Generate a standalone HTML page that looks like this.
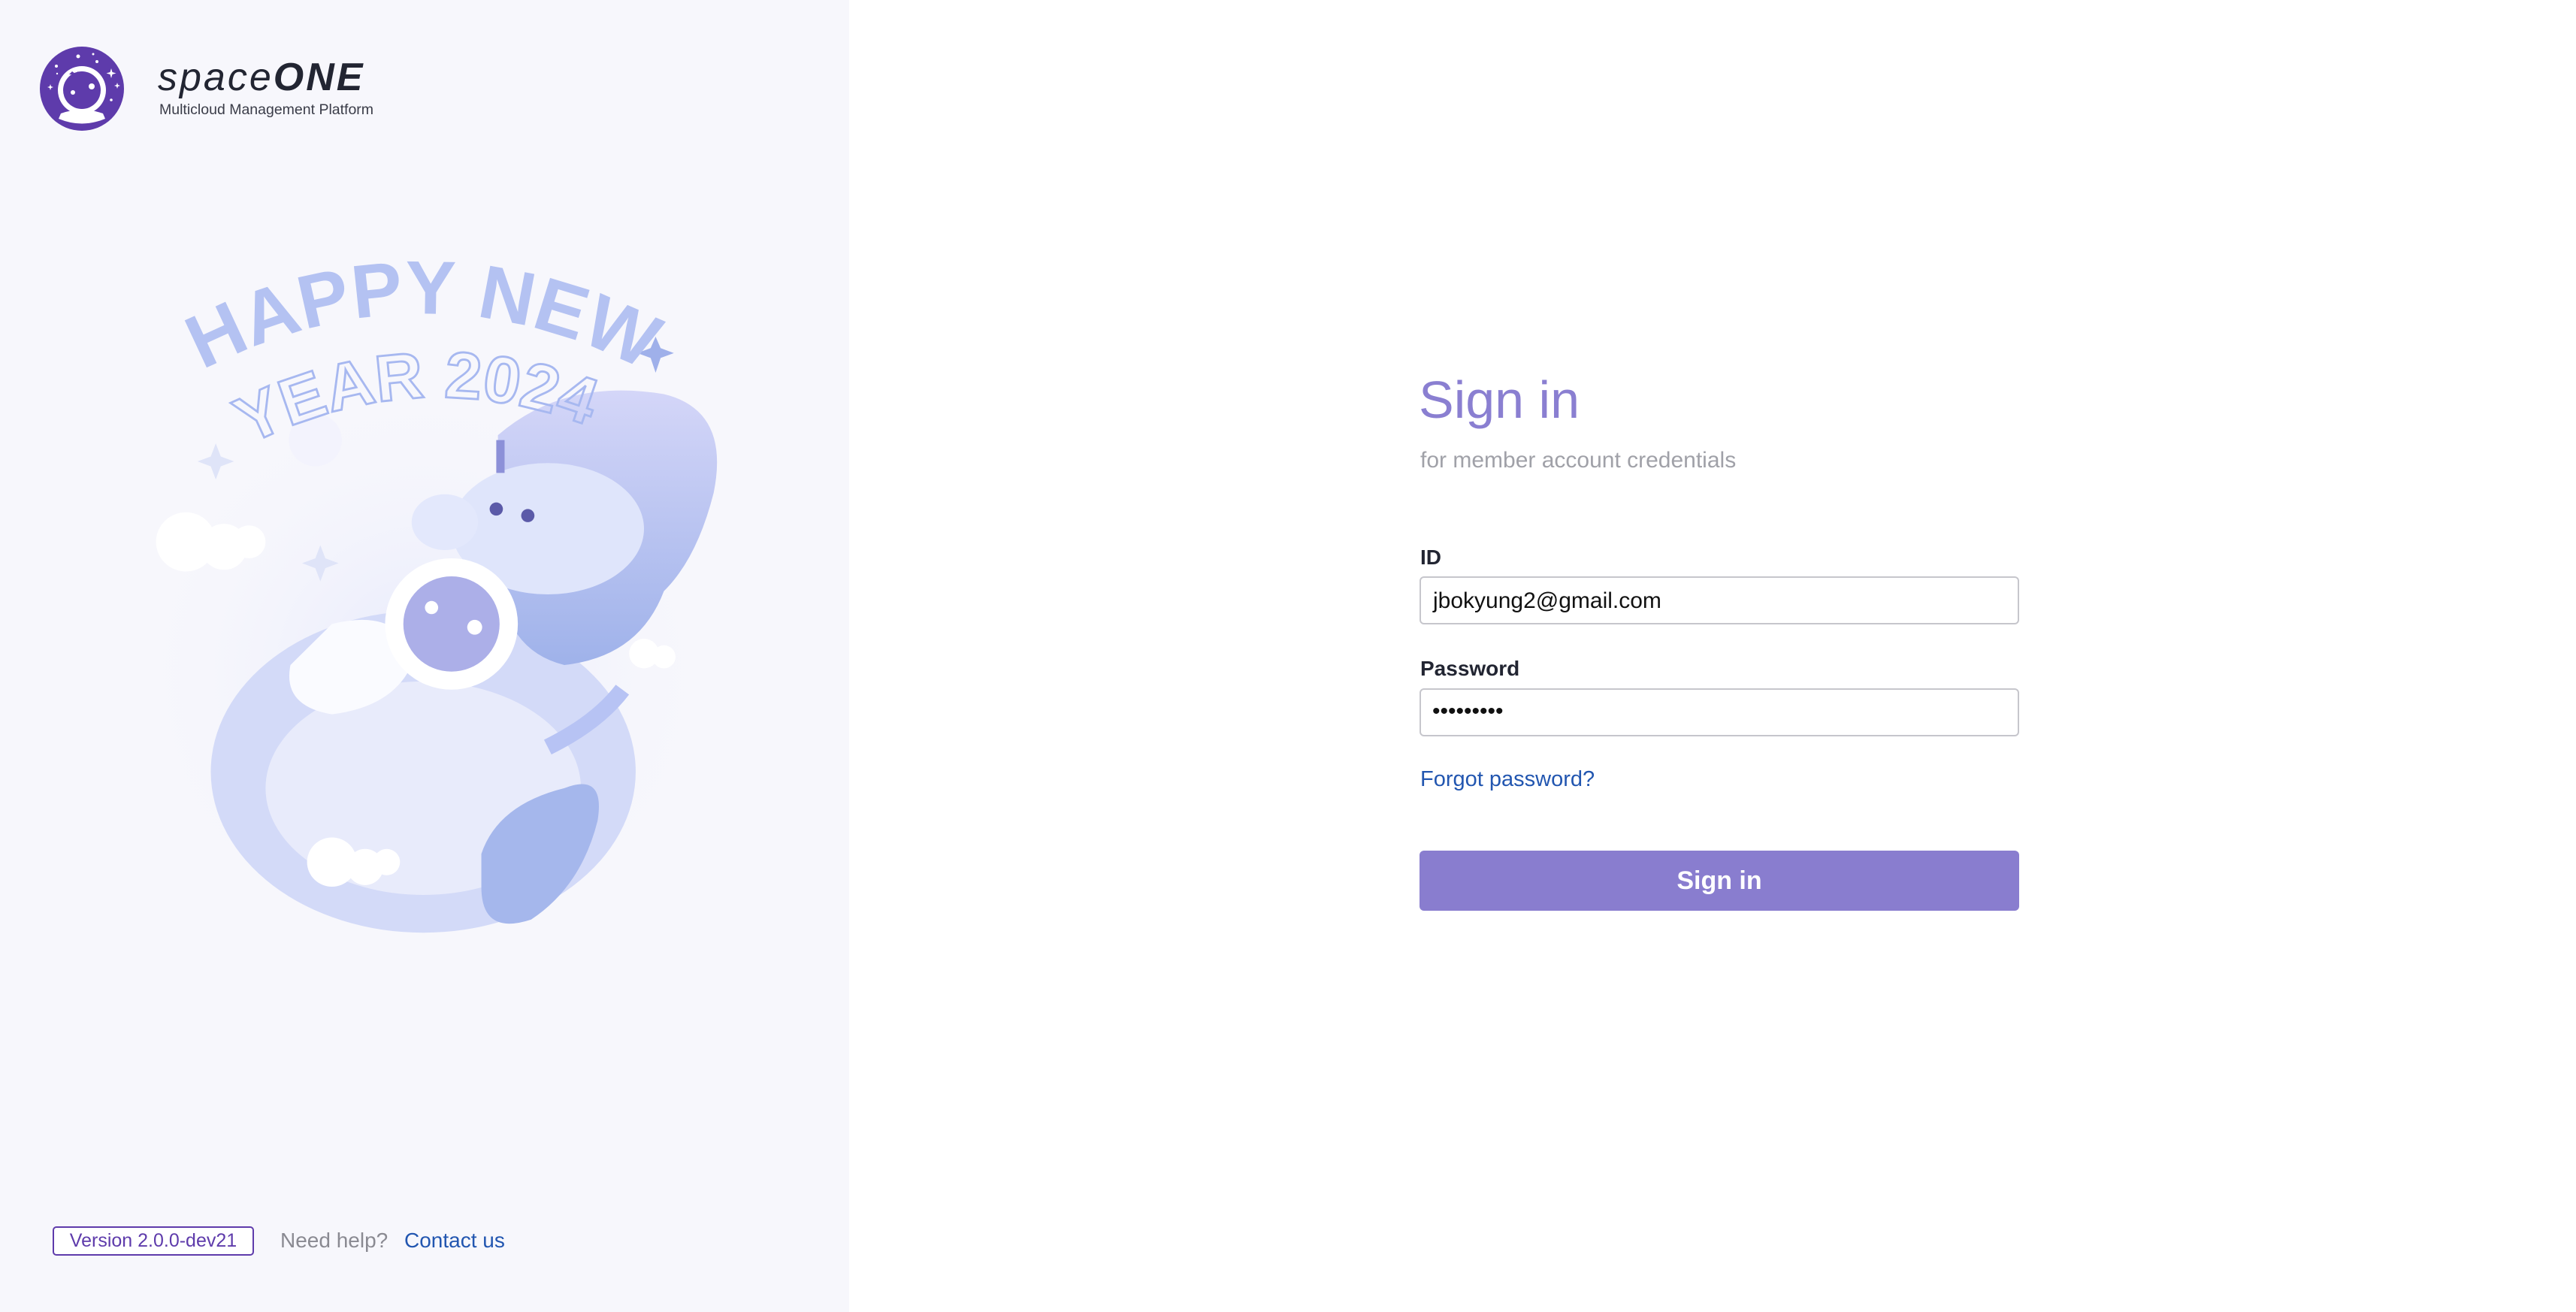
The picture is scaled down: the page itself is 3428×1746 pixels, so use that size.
<!DOCTYPE html>
<html><head><meta charset="utf-8">
<style>
*{margin:0;padding:0;box-sizing:border-box}
html,body{width:3428px;height:1746px;overflow:hidden;background:#fff;font-family:"Liberation Sans",sans-serif}
.left{position:absolute;left:0;top:0;width:1130px;height:1746px;background:#f7f7fc}
.abs{position:absolute;white-space:nowrap}
.inp{position:absolute;left:1889px;width:798px;height:64px;border:2px solid #c6c6cc;border-radius:6px;background:#fff}
</style></head><body>
<div class="left"></div>

<svg class="abs" style="left:50px;top:55px" width="130" height="130" viewBox="0 0 130 130">
<circle cx="59" cy="63" r="56" fill="#5e3bab"/>
<circle cx="59" cy="65" r="32" fill="#fff"/>
<circle cx="59" cy="65" r="25" fill="#5e3bab"/>
<path d="M42 44 L46 40 L50 43 L54 40 L56 45 Z" fill="#5e3bab"/>
<circle cx="72" cy="60" r="4" fill="#fff"/>
<circle cx="47" cy="68" r="3" fill="#fff"/>
<path d="M31 96 Q59 86 87 96 L90 103 Q59 116 28 103 Z" fill="#fff"/>
<circle cx="54" cy="20" r="2.5" fill="#fff"/><circle cx="79" cy="27" r="2" fill="#fff"/><circle cx="74" cy="17" r="1.5" fill="#fff"/>
<circle cx="25" cy="33" r="2" fill="#fff"/><circle cx="26" cy="43" r="1.2" fill="#fff"/><circle cx="98" cy="78" r="1.8" fill="#fff"/>
<path d="M98 36 l1.5 5 5 1.5 -5 1.5 -1.5 5 -1.5 -5 -5 -1.5 5 -1.5z" fill="#fff"/>
<path d="M106 55 l1 3 3 1 -3 1 -1 3 -1 -3 -3 -1 3 -1z" fill="#fff"/>
<path d="M17 57 l1 3 3 1 -3 1 -1 3 -1 -3 -3 -1 3 -1z" fill="#fff"/>
</svg>
<div class="abs" style="left:210px;top:76px;font-size:52px;font-style:italic;color:#222532;letter-spacing:3px;line-height:54px"><span style="font-weight:300">space</span><b>ONE</b></div>
<div class="abs" style="left:212px;top:135px;font-size:19.5px;color:#3a3c48">Multicloud Management Platform</div>

<svg class="abs" style="left:0;top:0" width="1130" height="1746" viewBox="0 0 511.6 799" preserveAspectRatio="none">
<defs>
<radialGradient id="gl" cx="0.5" cy="0.5" r="0.5"><stop offset="0" stop-color="#e6e9fb"/><stop offset="1" stop-color="#f7f7fc" stop-opacity="0"/></radialGradient>
<linearGradient id="mane" x1="0" y1="0" x2="0" y2="1"><stop offset="0" stop-color="#d4d6f8"/><stop offset="1" stop-color="#9fb2ea"/></linearGradient>
<path id="arc1" d="M110 232 Q255 150 400 232"/>
<path id="arc2" d="M130 282 Q250 210 375 268"/>
</defs>
<ellipse cx="255" cy="410" rx="180" ry="180" fill="url(#gl)"/>
<ellipse cx="255" cy="470" rx="128" ry="98" fill="#d3daf8"/>
<ellipse cx="255" cy="480" rx="95" ry="65" fill="#e8ebfb"/>
<path d="M300 265 Q340 230 400 240 Q440 250 430 300 Q420 340 400 360 Q385 400 340 405 Q300 395 300 340Z" fill="url(#mane)"/>
<path d="M290 520 Q300 490 340 480 Q365 470 360 500 Q350 540 320 560 Q290 570 290 540Z" fill="#a5b7ec"/>
<ellipse cx="330" cy="322" rx="58" ry="40" fill="#dfe5fb"/>
<ellipse cx="268" cy="318" rx="20" ry="17" fill="#e3e8fc"/>
<rect x="299" y="268" width="5" height="20" fill="#8c90d8"/>
<circle cx="299" cy="310" r="4" fill="#5b5aa8"/><circle cx="318" cy="314" r="4" fill="#5b5aa8"/>
<path d="M200 380 Q240 370 250 400 Q240 430 200 435 Q170 430 175 405Z" fill="#fafbff"/>
<circle cx="272" cy="380" r="40" fill="#fff"/>
<circle cx="272" cy="380" r="29" fill="#acafe8"/>
<circle cx="260" cy="370" r="4" fill="#fff"/><circle cx="286" cy="382" r="4.5" fill="#fff"/>
<path d="M330 455 Q360 440 375 420" stroke="#b7c3f4" stroke-width="10" fill="none"/>
<g fill="#fff"><circle cx="112" cy="330" r="18"/><circle cx="135" cy="333" r="14"/><circle cx="150" cy="330" r="10"/>
<circle cx="388" cy="398" r="9"/><circle cx="400" cy="400" r="7"/>
<circle cx="200" cy="525" r="15"/><circle cx="220" cy="528" r="11"/><circle cx="233" cy="525" r="8"/></g>
<circle cx="190" cy="268" r="16" fill="#f3f3fd"/>
<g fill="#dfe4f8"><path d="M130 270 l3 8 8 3 -8 3 -3 8 -3 -8 -8 -3 8 -3z"/><path d="M193 332 l3 8 8 3 -8 3 -3 8 -3 -8 -8 -3 8 -3z"/></g>
<path d="M395 205 l3 7 8 3 -8 3 -3 9 -3 -9 -8 -3 8 -3z" fill="#9fb0ea"/>
<text font-family="Liberation Sans" font-weight="bold" font-size="46" fill="#b4c2f2"><textPath href="#arc1" startOffset="50%" text-anchor="middle">HAPPY NEW</textPath></text>
<text font-family="Liberation Sans" font-weight="bold" font-size="40" fill="none" stroke="#a7b8f0" stroke-width="1.3"><textPath href="#arc2" startOffset="50%" text-anchor="middle">YEAR 2024</textPath></text>
</svg>

<div class="abs" style="left:70px;top:1632px;width:268px;height:39px;border:2px solid #5e3bab;border-radius:5px;background:#fff;color:#5e3bab;font-size:25px;line-height:35px;text-align:center">Version 2.0.0-dev21</div>
<div class="abs" style="left:373px;top:1635px;font-size:28px;line-height:32px;color:#8a8a92">Need help?</div>
<div class="abs" style="left:538px;top:1635px;font-size:28px;line-height:32px;color:#2256b0">Contact us</div>

<div class="abs" style="left:1888px;top:493px;font-size:70px;line-height:78px;color:#8a7fd1">Sign in</div>
<div class="abs" style="left:1890px;top:596px;font-size:30px;line-height:34px;color:#a0a1a8">for member account credentials</div>
<div class="abs" style="left:1890px;top:726px;font-size:28px;line-height:32px;color:#222532;font-weight:bold">ID</div>
<div class="inp" style="top:767px"></div>
<div class="abs" style="left:1907px;top:783px;font-size:30px;line-height:34px;color:#111">jbokyung2@gmail.com</div>
<div class="abs" style="left:1890px;top:874px;font-size:28px;line-height:32px;color:#222532;font-weight:bold">Password</div>
<div class="inp" style="top:916px"></div>
<div class="abs" style="left:1906px;top:930px;font-size:30px;line-height:34px;color:#111;letter-spacing:0px">•••••••••</div>
<div class="abs" style="left:1890px;top:1021px;font-size:29px;line-height:32px;color:#2256b0">Forgot password?</div>
<div class="abs" style="left:1889px;top:1132px;width:798px;height:80px;border-radius:6px;background:#897dcf;color:#fff;font-weight:bold;font-size:34px;line-height:80px;text-align:center">Sign in</div>
</body></html>
